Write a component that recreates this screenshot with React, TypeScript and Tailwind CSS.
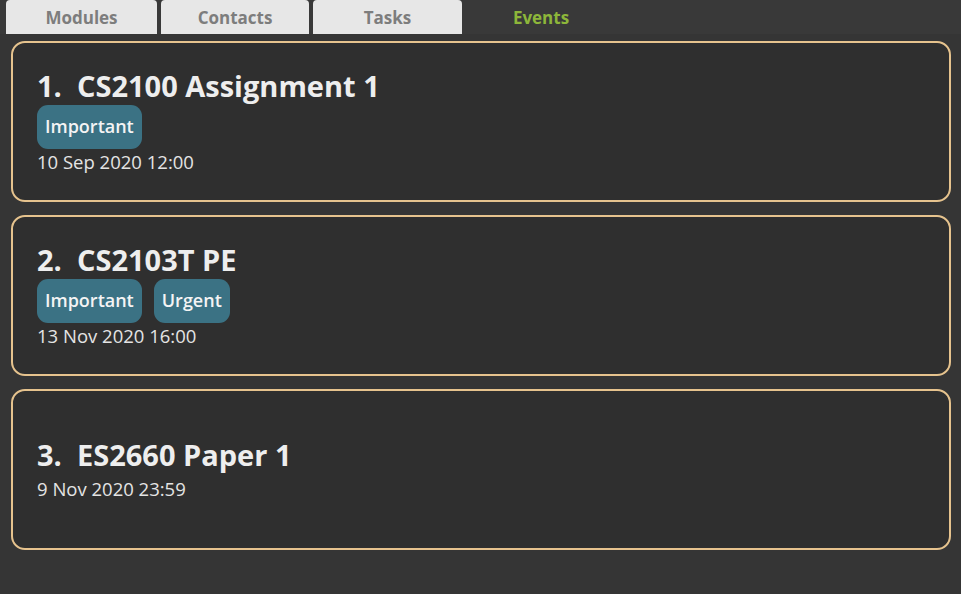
import React from 'react';

type Event = {
  id: number;
  name: string;
  tags: string[];
  date: string;
};

const EVENTS: Event[] = [
  { id: 1, name: 'CS2100 Assignment 1', tags: ['Important'], date: '10 Sep 2020 12:00' },
  { id: 2, name: 'CS2103T PE', tags: ['Important', 'Urgent'], date: '13 Nov 2020 16:00' },
  { id: 3, name: 'ES2660 Paper 1', tags: [], date: '9 Nov 2020 23:59' },
];

const TABS = [
  { label: 'Modules', width: 'w-[151px]' },
  { label: 'Contacts', width: 'w-[148px]' },
  { label: 'Tasks', width: 'w-[149px]' },
  { label: 'Events', width: 'w-[150px]' },
];

function EventCard({ event }: { event: Event }) {
  const hasTags = event.tags.length > 0;
  return (
    <div className="h-[161px] flex flex-col justify-center px-[24px] rounded-[14px] border-2 border-[#e6c38e] bg-[#2f2f2f]">
      <p className="text-[29px] leading-[32px] font-bold text-[#eeeeee] whitespace-pre">
        {event.id}.  {event.name}
      </p>
      {hasTags && (
        <div className="flex gap-[12px] mt-[3px]">
          {event.tags.map((tag) => (
            <span
              key={tag}
              className="h-[44px] px-[8px] flex items-center rounded-[11px] bg-[#3b7284] text-[18px] font-semibold text-[#f4f4f4]"
            >
              {tag}
            </span>
          ))}
        </div>
      )}
      <p
        className={
          hasTags
            ? 'mt-[1px] text-[18.5px] leading-[24px] text-[#e4e4e4]'
            : 'mt-[6px] text-[18.5px] leading-[24px] text-[#e4e4e4]'
        }
      >
        {event.date}
      </p>
    </div>
  );
}

export default function App() {
  return (
    <div
      className="w-[961px] h-[594px] bg-[#353535] flex flex-col overflow-hidden"
      style={{ fontFamily: '"Open Sans", "Noto Sans", sans-serif' }}
    >
      {/* Tab bar */}
      <div className="flex gap-[4px] pl-[6px] bg-[#393939] h-[34px]">
        {TABS.map((tab) => {
          const active = tab.label === 'Events';
          return (
            <div
              key={tab.label}
              className={
                active
                  ? `${tab.width} h-[34px] flex items-center justify-center pt-[2px] text-[17px] font-bold text-[#8db63a]`
                  : `${tab.width} h-[34px] flex items-center justify-center pt-[2px] rounded-t-[4px] bg-[#e7e7e7] text-[17px] font-bold text-[#7d7d7d]`
              }
            >
              {tab.label}
            </div>
          );
        })}
      </div>

      {/* Event list */}
      <div className="flex flex-col gap-[13px] pl-[11px] pr-[10px] pt-[7px]">
        {EVENTS.map((ev) => (
          <EventCard key={ev.id} event={ev} />
        ))}
      </div>
    </div>
  );
}
